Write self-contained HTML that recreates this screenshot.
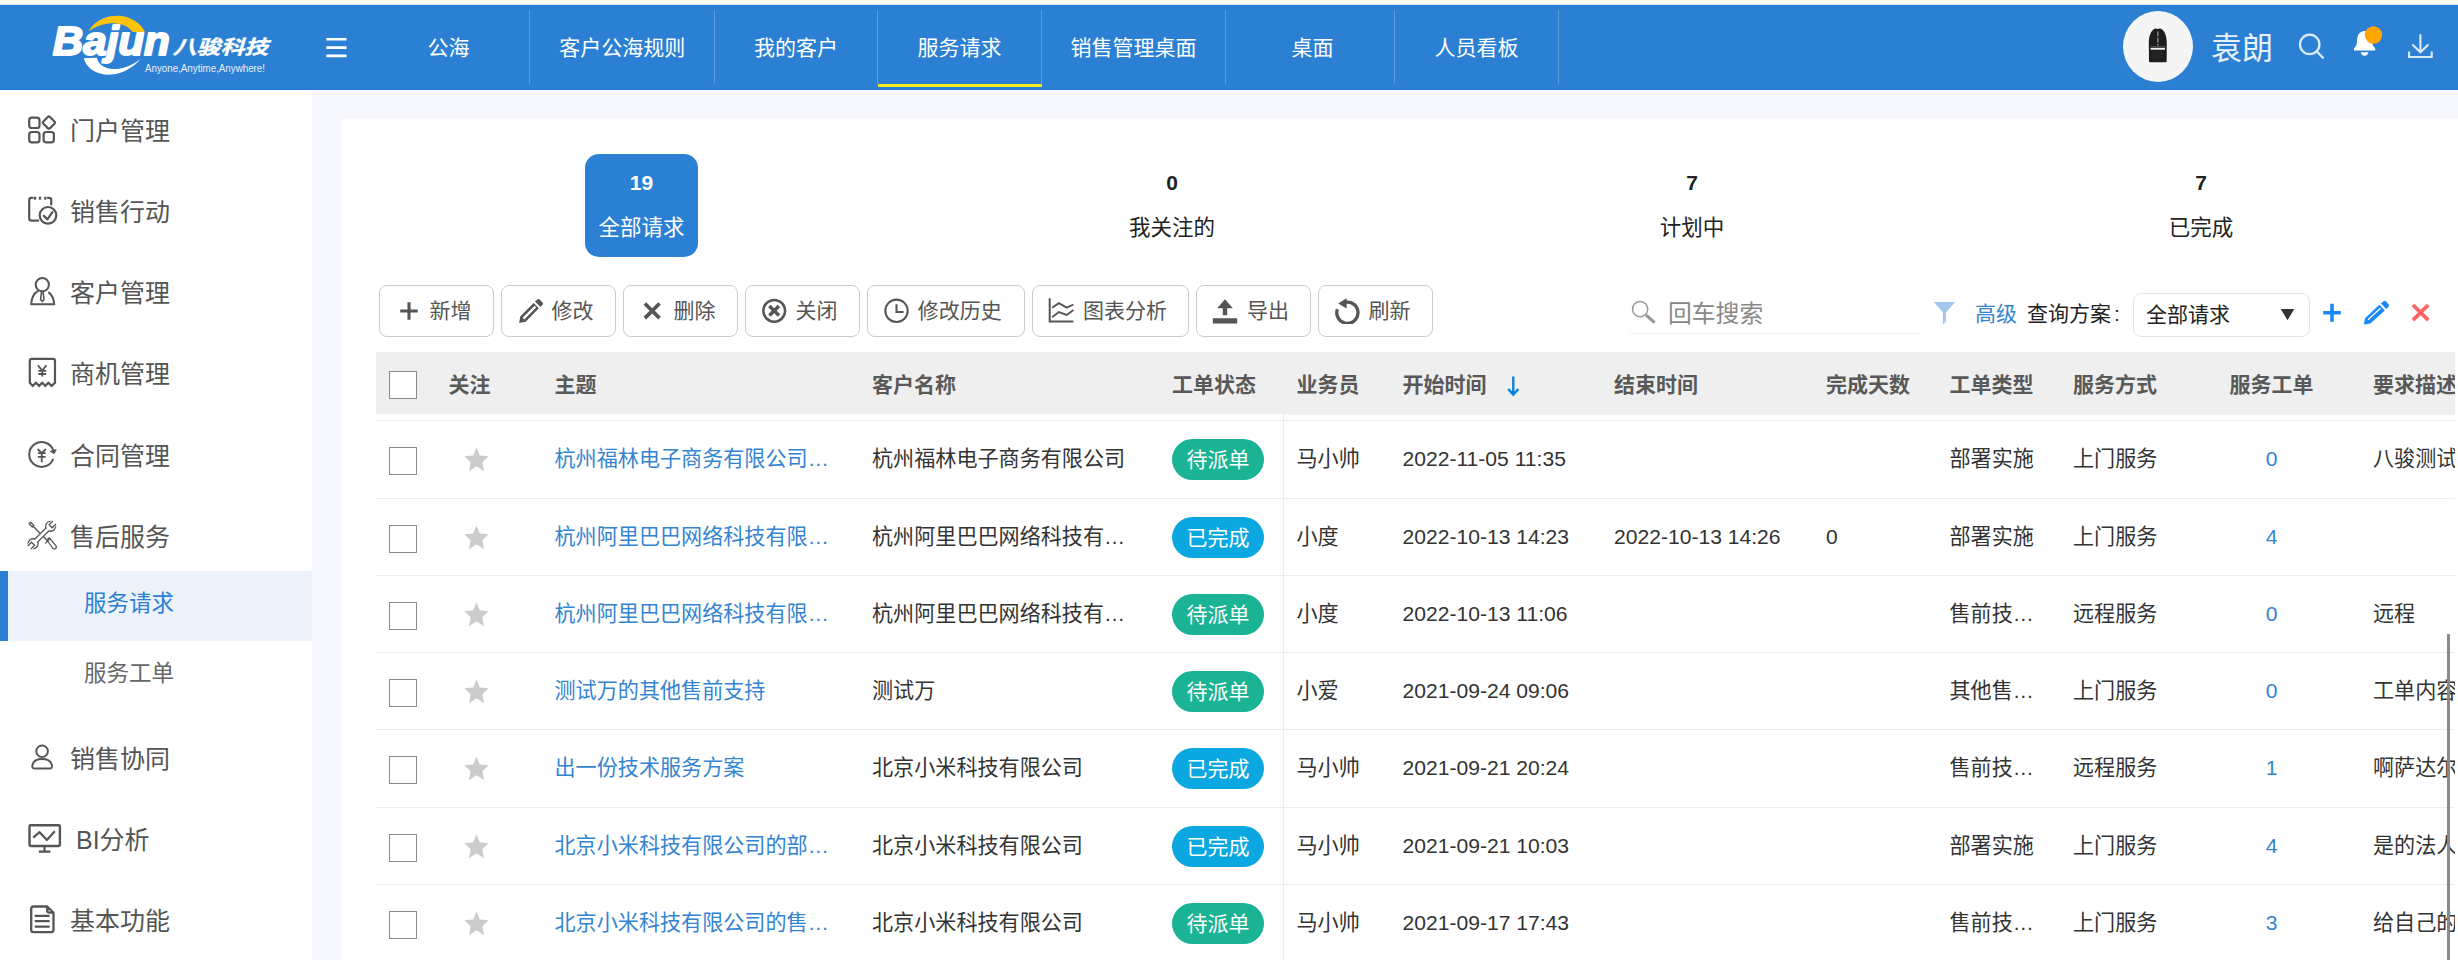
<!DOCTYPE html>
<html lang="zh-CN">
<head>
<meta charset="utf-8">
<title>服务请求</title>
<style>
*{box-sizing:border-box;margin:0;padding:0}
html,body{width:2458px;height:960px;overflow:hidden;background:#f7f8fd;}
body{font-family:"Liberation Sans","Noto Sans CJK SC",sans-serif;color:#333;position:relative;}
.abs{position:absolute}
#topstrip{position:absolute;left:0;top:0;width:2458px;height:5px;background:linear-gradient(#fafafa 0,#fafafa 3px,#fdfdfe 3px,#fdfdfe 4px,#e9e4e0 4px,#e9e4e0 5px)}
#header{position:absolute;left:0;top:5px;width:2458px;height:85px;background:#2c80d3;box-shadow:inset 0 1px 0 #1f7ad5,inset 0 -1px 0 #2178d2}
#sidebar{position:absolute;left:0;top:90px;width:312px;height:870px;background:#fff;}
#panel{position:absolute;left:341px;top:119px;width:2117px;height:841px;background:#fff;}
/* nav */
.nav{position:absolute;top:0;height:85px;color:#fff;font-size:21px;line-height:85px;text-align:center;white-space:nowrap}
.nav i{position:absolute;right:0;top:5px;width:1px;height:74px;background:rgba(255,255,255,.22)}
.nav.on:after{content:"";position:absolute;left:0;right:0;bottom:3px;height:3px;background:#f5ee1c}
/* sidebar */
.mi{position:absolute;left:0;width:312px;height:60px;line-height:60px;font-size:25px;color:#555;white-space:nowrap}
.mi span{position:absolute;left:70px;top:0}
.mi svg{position:absolute;left:26px;top:14px;width:32px;height:32px;fill:none;stroke:#555;stroke-width:2.4;stroke-linecap:round;stroke-linejoin:round}
.sub{position:absolute;left:0;width:312px;height:70px;line-height:66px;font-size:22.5px;color:#666;padding-left:84px}
.sub.on{background:#eef3fb;color:#2b80d3;border-left:8px solid #2b80d3;padding-left:76px}
/* cards */
.card{position:absolute;top:35px;height:103px;border-radius:14px;text-align:center;color:#222}
.card b{display:block;font-size:21px;line-height:24px;margin-top:16.5px;font-weight:700}
.card em{display:block;font-style:normal;font-size:21.5px;line-height:28px;margin-top:19.5px}
.card.on{background:#2c80d3;color:#fff}
/* toolbar */
.btn{position:absolute;top:166px;height:52px;border:1px solid #ccc;border-radius:8px;background:#fff;font-size:21px;color:#555;line-height:50px;white-space:nowrap}
.btn svg{position:absolute;left:16px;top:12px;width:26px;height:26px}
.btn span{position:absolute;left:49px;top:0}
/* table */
#thead{position:absolute;left:0;top:0;width:2079px;height:62px;background:#efefef}
.th{position:absolute;top:0;line-height:65px;font-size:21px;font-weight:700;color:#595959;white-space:nowrap}
.row{position:absolute;left:0;width:2079px;border-top:1px solid #e9eef5;font-size:21.1px;color:#333;line-height:76px;white-space:nowrap}
.row>*{position:absolute;top:0}
.cb{position:absolute;left:13px;width:28px;height:28px;border:1px solid #8a8a8a;border-radius:0;background:#fff}
.lnk{color:#3484d2}
.tag{top:17.5px !important;height:41.5px;width:92px;left:796px;border-radius:21px;color:#fff;text-align:center;line-height:41px;font-size:21px}
.g{background:#1ab394}.c{background:#0ba7e0}
</style>
</head>
<body>
<div id="topstrip"></div>
<div id="header">
<svg class="abs" style="left:40px;top:5px;overflow:visible" width="250" height="80" viewBox="40 10 250 80">
<path d="M88.2 31.4 C92 25 97.5 20.6 103.5 18.2 C109.5 15.8 116 15.2 122 16 C128.5 17 134 19.8 138.2 23.2 C141.4 25.8 143.6 28.8 145 32.2 L132.6 32 C130 28.6 126.6 26.2 122.4 24.8 C118 23.4 113.4 23 109 23.4 C104.6 23.8 100.2 25 96.4 26.8 C93.4 28.2 90.6 29.8 88.2 31.4 Z" fill="#fcc30b"/>
<path d="M83.6 58.2 C85.4 63.4 88.4 67.4 92.6 70.2 C97.8 73.6 104.4 75 111 74.6 C117.6 74.2 123.8 72 129 68.8 C133.6 66 137.6 62.6 140.8 58.8 C136.8 61.8 132.6 64.4 128 66.2 C123.2 68.2 118 69.2 113 69 C108.6 68.8 104.6 67.4 101.6 65.2 C99.2 63.4 97.6 60.8 96.8 57.8 Z" fill="#fff"/>
<path d="M112.6 54 L105.2 63 L110.4 55.6 Z" fill="#fff"/>
<text x="52.8" y="55.2" font-family="Liberation Sans, sans-serif" font-weight="700" font-style="italic" font-size="40" fill="#fff" stroke="#fff" stroke-width="2" stroke-linejoin="round" textLength="117" lengthAdjust="spacingAndGlyphs">Bajun</text>
<text x="172.4" y="53.6" font-family="Liberation Sans, Noto Sans CJK SC, sans-serif" font-weight="700" font-style="italic" font-size="19.5" fill="#fff" stroke="#fff" stroke-width="0.3" textLength="96" lengthAdjust="spacingAndGlyphs">八骏科技</text>
<text x="145" y="72" font-family="Liberation Sans, sans-serif" font-size="10.5" fill="#e8f1fb" textLength="120" lengthAdjust="spacingAndGlyphs">Anyone,Anytime,Anywhere!</text>
</svg>
<svg class="abs" style="left:325px;top:33px" width="22" height="20" viewBox="0 0 22 20"><path d="M1.3 1.3h20.2M1.3 9.6h20.2M1.3 17.9h20.2" stroke="#fff" stroke-width="2.6" fill="none"/></svg>
<div class="nav" style="left:367px;width:163px">公海<i></i></div>
<div class="nav" style="left:530px;width:184.5px">客户公海规则<i></i></div>
<div class="nav" style="left:714.5px;width:163.0px">我的客户<i></i></div>
<div class="nav on" style="left:877.5px;width:164.0px">服务请求<i></i></div>
<div class="nav" style="left:1041.5px;width:184.0px">销售管理桌面<i></i></div>
<div class="nav" style="left:1225.5px;width:169.0px;padding-left:5px">桌面<i></i></div>
<div class="nav" style="left:1394.5px;width:164.0px">人员看板<i></i></div>
<div class="abs" style="left:2123px;top:5.8px;width:70.2px;height:71.2px;border-radius:50%;background:#f5f5f5"></div>
<svg class="abs" style="left:2146px;top:21px" width="24" height="38" viewBox="0 0 24 38">
<path d="M4.2 36.2 Q3 36.2 3 35 L2.8 17 C2.8 8 6.4 2.1 11.8 2.1 C17.2 2.1 20.8 8 20.8 17 L20.7 35 Q20.7 36.2 19.5 36.2 Z" fill="#1e1e21"/>
<path d="M9.6 3.1 Q11.8 0.6 14 3.1 Q11.8 2.2 9.6 3.1 Z" fill="#fff"/>
<path d="M11.9 5.6 V19.4" stroke="#a8a8a8" stroke-width="1.1" stroke-dasharray="5 1.2"/>
<rect x="4.6" y="21.8" width="14.4" height="1.9" fill="#f0f0f0"/>
<rect x="4.4" y="20.3" width="14.8" height="0.6" fill="#666"/>
<g fill="#555"><circle cx="8" cy="28" r=".5"/><circle cx="10" cy="30" r=".5"/><circle cx="12" cy="28" r=".5"/><circle cx="14" cy="30" r=".5"/><circle cx="16" cy="28" r=".5"/><circle cx="8" cy="32" r=".5"/><circle cx="12" cy="32" r=".5"/><circle cx="16" cy="32" r=".5"/><circle cx="10" cy="26" r=".5"/><circle cx="14" cy="26" r=".5"/></g>
</svg>
<div class="abs" style="left:2211px;top:22px;font-size:31px;line-height:44px;color:#e8f1fb;white-space:nowrap">袁朗</div>
<svg class="abs" style="left:2296px;top:26px" width="32" height="32" viewBox="0 0 32 32"><circle cx="13.7" cy="13.4" r="9.7" fill="none" stroke="#dcebfa" stroke-width="2.3"/><path d="M20.7 20.4 L27 26.7" stroke="#dcebfa" stroke-width="2.3" stroke-linecap="round"/></svg>
<svg class="abs" style="left:2350px;top:18px" width="36" height="36" viewBox="0 0 36 36">
<path d="M4 27.4 H25.2 V25.2 C22.8 23.5 22.3 21 22.1 17 C21.8 11.5 19.4 8 14.6 8 C9.8 8 7.4 11.5 7.1 17 C6.9 21 6.4 23.5 4 25.2 Z" fill="#fff"/>
<path d="M10.8 29.3 H18.4 C18.2 31.5 16.7 32.7 14.6 32.7 C12.5 32.7 11 31.5 10.8 29.3 Z" fill="#fff"/>
<circle cx="23.5" cy="12" r="8.7" fill="#ffa500"/></svg>
<svg class="abs" style="left:2404px;top:26px" width="32" height="30" viewBox="0 0 32 30"><path d="M16.4 3.2 V21 M8.4 13.4 L16.4 21.3 L24.4 13.4 M5.1 20.4 V26 H27.7 V20.4" fill="none" stroke="#dcebfa" stroke-width="2.1"/></svg>
</div>
<div id="sidebar">
<div class="sub on" style="top:481px">服务请求</div>
<div class="sub" style="top:551px">服务工单</div>
<div class="mi" style="top:11px"><span style="left:70px">门户管理</span></div>
<div class="mi" style="top:92px"><span style="left:70px">销售行动</span></div>
<div class="mi" style="top:173px"><span style="left:70px">客户管理</span></div>
<div class="mi" style="top:254px"><span style="left:70px">商机管理</span></div>
<div class="mi" style="top:336px"><span style="left:70px">合同管理</span></div>
<div class="mi" style="top:417px"><span style="left:70px">售后服务</span></div>
<div class="mi" style="top:639px"><span style="left:70px">销售协同</span></div>
<div class="mi" style="top:720px"><span style="left:76px">BI分析</span></div>
<div class="mi" style="top:801px"><span style="left:70px">基本功能</span></div>
<svg class="abs" style="left:0;top:0" width="312" height="870" viewBox="0 90 312 870" fill="none" stroke="#555" stroke-width="2.2" stroke-linecap="round" stroke-linejoin="round">
<!-- portal -->
<rect x="29.2" y="117.7" width="10.3" height="10.3" rx="2.6"/>
<rect x="29.2" y="132" width="10.3" height="10.3" rx="2.6"/>
<rect x="43.6" y="132" width="10.3" height="10.3" rx="2.6"/>
<rect x="44.2" y="117.9" width="9.4" height="9.4" rx="1.6" transform="rotate(45 48.9 122.6)"/>
<!-- sales action -->
<path d="M32.6 197.8 H31.4 Q29.2 197.8 29.2 200 V218.4 Q29.2 220.6 31.4 220.6 H38.2 M47.8 197.8 H49 Q51.25 197.8 51.25 200 V204.5"/>
<path d="M35 196.7 V199.8 M40 196.7 V199.8 M45.3 196.7 V199.8" stroke-linecap="butt"/>
<circle cx="48" cy="215.3" r="8.3"/>
<path d="M43.9 215.9 L47.4 219.4 L52.4 212.1"/>
<!-- customer -->
<circle cx="42.3" cy="284.7" r="6.6" stroke-width="2"/>
<path d="M31.2 304.3 H54.2 C53.8 299 52 295 49 292.6 M31.2 304.3 C31.6 298 34 293.5 37.6 291.2" stroke-width="2"/>
<path d="M41.5 292 L40.6 299.5 L42.3 301.6 L44 299.5 L43.1 292" stroke-width="1.6"/>
<!-- opportunity -->
<path d="M29.8 382.8 V361 Q29.8 358.9 31.9 358.9 H52.9 Q55 358.9 55 361 V382.8 L51.6 385.9 L48.4 382.8 L45.3 385.9 L42.2 382.8 L39.1 385.9 L35.9 382.8 L32.8 385.9 Z" stroke-linejoin="miter"/>
<path d="M37.9 365.2 L42.2 370.6 L46.5 365.2 M42.2 370.6 V376.4 M38.3 370.8 H46.2 M38.3 374 H46.2" stroke-width="1.8" stroke-linecap="butt"/>
<!-- contract -->
<path d="M53.4 450.6 A12.4 12.4 0 1 0 52.9 459.6" stroke-width="2"/>
<path d="M50.6 451.6 L54.2 453.6 L56 449.9 Z" fill="#555" stroke-width="1"/>
<path d="M37.6 449 L41.75 453.1 L45.9 449 M41.75 453.1 V462.3 M37.9 453.2 H45.7 M37.9 456.9 H45.7" stroke-width="1.8" stroke-linecap="butt"/>
<!-- after-sales: screwdriver + wrench -->
<g stroke-width="1.3">
<path d="M30.6 522.2 L33.9 525.4 L32.3 527 L29.1 523.8 Z M33 526 L46.6 540"/>
<path d="M45.6 543 L50.2 538.4"/>
<path d="M47 540 L49.2 537.8 L55.9 545.6 Q57 547.6 55.4 548.6 Q53.8 549.4 52.6 548 Z"/>
</g>
<g stroke="none">
<circle cx="50.6" cy="526.3" r="5.6" fill="#555"/><circle cx="33.1" cy="543.7" r="5.6" fill="#555"/>
<path d="M33.1 543.7 L50.6 526.3" stroke="#555" stroke-width="5.4" stroke-linecap="butt"/>
<circle cx="50.6" cy="526.3" r="4.3" fill="#fff"/><circle cx="33.1" cy="543.7" r="4.3" fill="#fff"/>
<path d="M33.1 543.7 L50.6 526.3" stroke="#fff" stroke-width="2.8" stroke-linecap="butt"/>
<path d="M50.9 526 L55.2 521.7" stroke="#fff" stroke-width="7" stroke-linecap="butt"/>
<path d="M50.2 526.7 L54.4 522.5" stroke="#555" stroke-width="5.6" stroke-linecap="butt"/>
<path d="M51.1 525.8 L55.6 521.3" stroke="#fff" stroke-width="3" stroke-linecap="butt"/>
<path d="M32.8 544 L28.5 548.3" stroke="#fff" stroke-width="7" stroke-linecap="butt"/>
<path d="M33.5 543.3 L29.3 547.5" stroke="#555" stroke-width="5.6" stroke-linecap="butt"/>
<path d="M32.6 544.2 L28.1 548.7" stroke="#fff" stroke-width="3" stroke-linecap="butt"/>
</g>
<!-- sales collaboration -->
<circle cx="42.1" cy="751.3" r="5.8" stroke-width="1.9"/>
<path d="M32.3 765.8 C33 761.2 37 759 42.1 759 C47.2 759 51.3 761.2 52 765.8 C52.2 767.6 51.2 768.5 49.5 768.5 H34.8 C33.1 768.5 32.1 767.6 32.3 765.8 Z" stroke-width="1.9"/>
<!-- BI -->
<rect x="29.5" y="825.3" width="30.4" height="20.7" rx="1.2" stroke-width="2.4"/>
<path d="M44.5 846 V851.5 M38.8 851.6 H50.4 M33.2 837.6 L39.6 832.2 L46.9 840 L54.8 831.3" stroke-width="2.2" stroke-linecap="butt"/>
<!-- basic -->
<path d="M47.2 906.5 H33.6 Q31.2 906.5 31.2 908.9 V929.8 Q31.2 932.2 33.6 932.2 H51.1 Q53.5 932.2 53.5 929.8 V912.7 Z M47.2 906.5 V910.3 Q47.2 912.7 49.6 912.7 H53.5 M35.6 915.8 H48.8 M35.6 921.1 H48.8 M35.6 926.6 H48.8" stroke-width="2.3"/>
</svg>
</div>
<div class="abs" style="left:312px;top:90px;width:2146px;height:1px;background:#fcfcfe"></div>
<div id="panel">
<div class="card on" style="left:244px;width:113px"><b>19</b><em>全部请求</em></div>
<div class="card" style="left:774.5px;width:113px"><b>0</b><em>我关注的</em></div>
<div class="card" style="left:1305px;width:92px"><b>7</b><em>计划中</em></div>
<div class="card" style="left:1814px;width:92px"><b>7</b><em>已完成</em></div>
<div class="btn" style="left:38px;width:114.5px"><svg style="left:16px" viewBox="0 0 26 26"><path d="M13 4.2V21.8M4.2 13H21.8" stroke="#555" stroke-width="3.1" fill="none"/></svg><span style="left:49.5px">新增</span></div>
<div class="btn" style="left:160px;width:114.5px"><svg style="left:15.6px" viewBox="0 0 26 26"><path d="M1.2 25 L2.2 18.4 L15.6 5 L20.9 10.3 L7.6 23.7 Z M17 3.6 L19.2 1.4 Q20.4 0.4 21.6 1.4 L24.6 4.4 Q25.6 5.6 24.6 6.8 L22.4 9 Z" fill="#555"/><path d="M5.4 20.6 L17.4 8.6" stroke="#fff" stroke-width="2.2"/></svg><span style="left:49.5px">修改</span></div>
<div class="btn" style="left:282px;width:114.5px"><svg style="left:15.3px" viewBox="0 0 26 26"><path d="M5.9 5.5L20.5 20.1M20.5 5.5L5.9 20.1" stroke="#555" stroke-width="3.7" fill="none"/></svg><span style="left:49.5px">删除</span></div>
<div class="btn" style="left:404px;width:114.5px"><svg style="left:15.2px" viewBox="0 0 26 26"><circle cx="13.2" cy="12.8" r="10.9" fill="none" stroke="#555" stroke-width="2.5"/><path d="M8.4 8L18 17.6M18 8L8.4 17.6" stroke="#555" stroke-width="3.5" fill="none"/></svg><span style="left:49.5px">关闭</span></div>
<div class="btn" style="left:526.2px;width:157.5px"><svg style="left:15.5px" viewBox="0 0 26 26"><circle cx="12.5" cy="12.8" r="11.2" fill="none" stroke="#555" stroke-width="2.1"/><path d="M12.5 6.2V14H19.6" stroke="#555" stroke-width="2.1" fill="none"/></svg><span style="left:49.6px">修改历史</span></div>
<div class="btn" style="left:691.2px;width:156.5px"><svg style="left:14.6px" viewBox="0 0 26 26"><path d="M1.7 0.2V23.6H25.4" stroke="#555" stroke-width="2" fill="none"/><path d="M4.1 9.8L10.8 5.1L18.7 9.6L25.4 6.5M4.1 19.2L10.8 14.1L18.7 16.9L25.4 12" stroke="#555" stroke-width="1.9" fill="none"/></svg><span style="left:49.8px">图表分析</span></div>
<div class="btn" style="left:855.2px;width:114.5px"><svg style="left:15.1px" viewBox="0 0 26 26"><path d="M13 1.2L20.8 10.2H15.2V17.2H10.8V10.2H5.2Z M0.8 20.2H25.2V25.4H0.8Z" fill="#555"/></svg><span style="left:49.8px">导出</span></div>
<div class="btn" style="left:977.2px;width:114.5px"><svg style="left:15.3px" viewBox="0 0 26 26"><path d="M8.8 5.2 A10.6 10.6 0 1 1 3.4 11.2" stroke="#555" stroke-width="3.3" fill="none"/><path d="M4.2 5.4 L12.6 0.2 L12.6 10.4 Z" fill="#555"/></svg><span style="left:49.3px">刷新</span></div>
<svg class="abs" style="left:1289px;top:179px" width="28" height="28" viewBox="0 0 28 28"><circle cx="10.1" cy="11.1" r="7.6" fill="none" stroke="#999" stroke-width="1.5"/><path d="M16 17 L24.6 24.6" stroke="#999" stroke-width="3.2"/></svg>
<div class="abs" style="left:1327px;top:176.5px;font-size:23.8px;line-height:36px;color:#888;white-space:nowrap">回车搜索</div>
<div class="abs" style="left:1289px;top:213.5px;width:289px;height:1px;background:#e8eff6"></div>
<svg class="abs" style="left:1591px;top:181px" width="26" height="26" viewBox="0 0 26 26"><path d="M1.8 2.1 H23.2 L13.9 12.6 V21.2 L10.9 24.6 V12.6 Z" fill="#a3c6ec"/></svg>
<div class="abs lnk" style="left:1634px;top:177px;font-size:21px;line-height:36px;white-space:nowrap">高级</div>
<div class="abs" style="left:1686px;top:177px;font-size:21px;line-height:36px;color:#222;white-space:nowrap">查询方案<span style="margin-left:3px">:</span></div>
<div class="abs" style="left:1792px;top:174px;width:177px;height:44px;border:1px solid #e3e3e3;border-radius:8px;background:#fff"></div>
<div class="abs" style="left:1805px;top:178px;font-size:21px;line-height:36px;color:#222;white-space:nowrap">全部请求</div>
<svg class="abs" style="left:1939px;top:189px" width="15" height="13" viewBox="0 0 15 13"><path d="M0.7 0.9 H14.3 L7.5 12.2 Z" fill="#333"/></svg>
<svg class="abs" style="left:1981px;top:183px" width="20" height="22" viewBox="0 0 20 22"><path d="M10 1.8V19.8M1.2 10.8H18.8" stroke="#1989fa" stroke-width="3.6" fill="none"/></svg>
<svg class="abs" style="left:2022px;top:181px" width="28" height="26" viewBox="0 0 28 26"><path d="M0.8 24.6 L2 18.2 L16.4 4.8 L21.8 10.4 L7.4 23.6 Z M18 3.4 L20.4 1.3 Q21.8 0.3 23.1 1.5 L25.6 4.2 Q26.6 5.6 25.4 6.9 L23.2 9 Z" fill="#1989fa"/><path d="M5 19.8 L17.4 8.2" stroke="#fff" stroke-width="1.3"/></svg>
<svg class="abs" style="left:2069px;top:183px" width="22" height="22" viewBox="0 0 22 22"><path d="M3 3L18.2 18.2M18.2 3L3 18.2" stroke="#ff6464" stroke-width="3.8" fill="none"/></svg>
<div id="tbl" class="abs" style="left:35px;top:233px;width:2079px;height:608px;overflow:hidden">
<div class="abs" style="left:908px;top:62px;width:1171px;height:1px;background:#f3f3f3"></div><div id="thead"><div class="cb" style="top:19px"></div><div class="th" style="left:72.5px">关注</div><div class="th" style="left:178.5px">主题</div><div class="th" style="left:496px">客户名称</div><div class="th" style="left:796px">工单状态</div><div class="th" style="left:920.5px">业务员</div><div class="th" style="left:1026.5px">开始时间</div><div class="th" style="left:1238px">结束时间</div><div class="th" style="left:1450px">完成天数</div><div class="th" style="left:1573.5px">工单类型</div><div class="th" style="left:1697px">服务方式</div><div class="th" style="left:1853.5px">服务工单</div><div class="th" style="left:1997px">要求描述</div><svg class="abs" style="left:1129.5px;top:23px" width="15" height="22" viewBox="0 0 15 22"><path d="M7.3 1.4V19.2M2.2 14L7.3 19.6L12.4 14" stroke="#0b80d8" stroke-width="2.4" fill="none"/></svg></div>
<div class="row" style="top:68px;height:78px"><div class="cb" style="top:26px"></div><svg class="abs" style="left:88.3px;top:25.6px" width="25" height="25" viewBox="0 0 25 25"><path d="M12.5 0.5 L15.8 8.4 L24.55 9.15 L18.4 15.2 L20 24.15 L12.5 19.2 L5 24.15 L6.6 15.2 L0.3 9.15 L9.2 8.4 Z" fill="#ccc"/></svg><span class="lnk" style="left:178.5px">杭州福林电子商务有限公司…</span><span style="left:496px">杭州福林电子商务有限公司</span><div class="tag g">待派单</div><span style="left:920.5px">马小帅</span><span style="left:1026.5px">2022-11-05 11:35</span><span style="left:1573.5px">部署实施</span><span style="left:1697px">上门服务</span><span class="lnk" style="left:1853.5px;width:84px;text-align:center">0</span><span style="left:1997px">八骏测试</span></div>
<div class="row" style="top:146px;height:77px"><div class="cb" style="top:26px"></div><svg class="abs" style="left:88.3px;top:25.6px" width="25" height="25" viewBox="0 0 25 25"><path d="M12.5 0.5 L15.8 8.4 L24.55 9.15 L18.4 15.2 L20 24.15 L12.5 19.2 L5 24.15 L6.6 15.2 L0.3 9.15 L9.2 8.4 Z" fill="#ccc"/></svg><span class="lnk" style="left:178.5px">杭州阿里巴巴网络科技有限…</span><span style="left:496px">杭州阿里巴巴网络科技有…</span><div class="tag c">已完成</div><span style="left:920.5px">小度</span><span style="left:1026.5px">2022-10-13 14:23</span><span style="left:1238px">2022-10-13 14:26</span><span style="left:1450px">0</span><span style="left:1573.5px">部署实施</span><span style="left:1697px">上门服务</span><span class="lnk" style="left:1853.5px;width:84px;text-align:center">4</span></div>
<div class="row" style="top:223px;height:77px"><div class="cb" style="top:26px"></div><svg class="abs" style="left:88.3px;top:25.6px" width="25" height="25" viewBox="0 0 25 25"><path d="M12.5 0.5 L15.8 8.4 L24.55 9.15 L18.4 15.2 L20 24.15 L12.5 19.2 L5 24.15 L6.6 15.2 L0.3 9.15 L9.2 8.4 Z" fill="#ccc"/></svg><span class="lnk" style="left:178.5px">杭州阿里巴巴网络科技有限…</span><span style="left:496px">杭州阿里巴巴网络科技有…</span><div class="tag g">待派单</div><span style="left:920.5px">小度</span><span style="left:1026.5px">2022-10-13 11:06</span><span style="left:1573.5px">售前技…</span><span style="left:1697px">远程服务</span><span class="lnk" style="left:1853.5px;width:84px;text-align:center">0</span><span style="left:1997px">远程</span></div>
<div class="row" style="top:300px;height:77px"><div class="cb" style="top:26px"></div><svg class="abs" style="left:88.3px;top:25.6px" width="25" height="25" viewBox="0 0 25 25"><path d="M12.5 0.5 L15.8 8.4 L24.55 9.15 L18.4 15.2 L20 24.15 L12.5 19.2 L5 24.15 L6.6 15.2 L0.3 9.15 L9.2 8.4 Z" fill="#ccc"/></svg><span class="lnk" style="left:178.5px">测试万的其他售前支持</span><span style="left:496px">测试万</span><div class="tag g">待派单</div><span style="left:920.5px">小爱</span><span style="left:1026.5px">2021-09-24 09:06</span><span style="left:1573.5px">其他售…</span><span style="left:1697px">上门服务</span><span class="lnk" style="left:1853.5px;width:84px;text-align:center">0</span><span style="left:1997px">工单内容</span></div>
<div class="row" style="top:377px;height:78px"><div class="cb" style="top:26px"></div><svg class="abs" style="left:88.3px;top:25.6px" width="25" height="25" viewBox="0 0 25 25"><path d="M12.5 0.5 L15.8 8.4 L24.55 9.15 L18.4 15.2 L20 24.15 L12.5 19.2 L5 24.15 L6.6 15.2 L0.3 9.15 L9.2 8.4 Z" fill="#ccc"/></svg><span class="lnk" style="left:178.5px">出一份技术服务方案</span><span style="left:496px">北京小米科技有限公司</span><div class="tag c">已完成</div><span style="left:920.5px">马小帅</span><span style="left:1026.5px">2021-09-21 20:24</span><span style="left:1573.5px">售前技…</span><span style="left:1697px">远程服务</span><span class="lnk" style="left:1853.5px;width:84px;text-align:center">1</span><span style="left:1997px">啊萨达尔</span></div>
<div class="row" style="top:455px;height:77px"><div class="cb" style="top:26px"></div><svg class="abs" style="left:88.3px;top:25.6px" width="25" height="25" viewBox="0 0 25 25"><path d="M12.5 0.5 L15.8 8.4 L24.55 9.15 L18.4 15.2 L20 24.15 L12.5 19.2 L5 24.15 L6.6 15.2 L0.3 9.15 L9.2 8.4 Z" fill="#ccc"/></svg><span class="lnk" style="left:178.5px">北京小米科技有限公司的部…</span><span style="left:496px">北京小米科技有限公司</span><div class="tag c">已完成</div><span style="left:920.5px">马小帅</span><span style="left:1026.5px">2021-09-21 10:03</span><span style="left:1573.5px">部署实施</span><span style="left:1697px">上门服务</span><span class="lnk" style="left:1853.5px;width:84px;text-align:center">4</span><span style="left:1997px">是的法人</span></div>
<div class="row" style="top:532px;height:77px"><div class="cb" style="top:26px"></div><svg class="abs" style="left:88.3px;top:25.6px" width="25" height="25" viewBox="0 0 25 25"><path d="M12.5 0.5 L15.8 8.4 L24.55 9.15 L18.4 15.2 L20 24.15 L12.5 19.2 L5 24.15 L6.6 15.2 L0.3 9.15 L9.2 8.4 Z" fill="#ccc"/></svg><span class="lnk" style="left:178.5px">北京小米科技有限公司的售…</span><span style="left:496px">北京小米科技有限公司</span><div class="tag g">待派单</div><span style="left:920.5px">马小帅</span><span style="left:1026.5px">2021-09-17 17:43</span><span style="left:1573.5px">售前技…</span><span style="left:1697px">上门服务</span><span class="lnk" style="left:1853.5px;width:84px;text-align:center">3</span><span style="left:1997px">给自己的</span></div>
<div class="abs" style="left:907px;top:0;width:1px;height:608px;background:#e8eef6"></div>
</div>
<div class="abs" style="left:2106.3px;top:515px;width:2.4px;height:330px;background:#8a8a8a"></div>
</div>
</body>
</html>
